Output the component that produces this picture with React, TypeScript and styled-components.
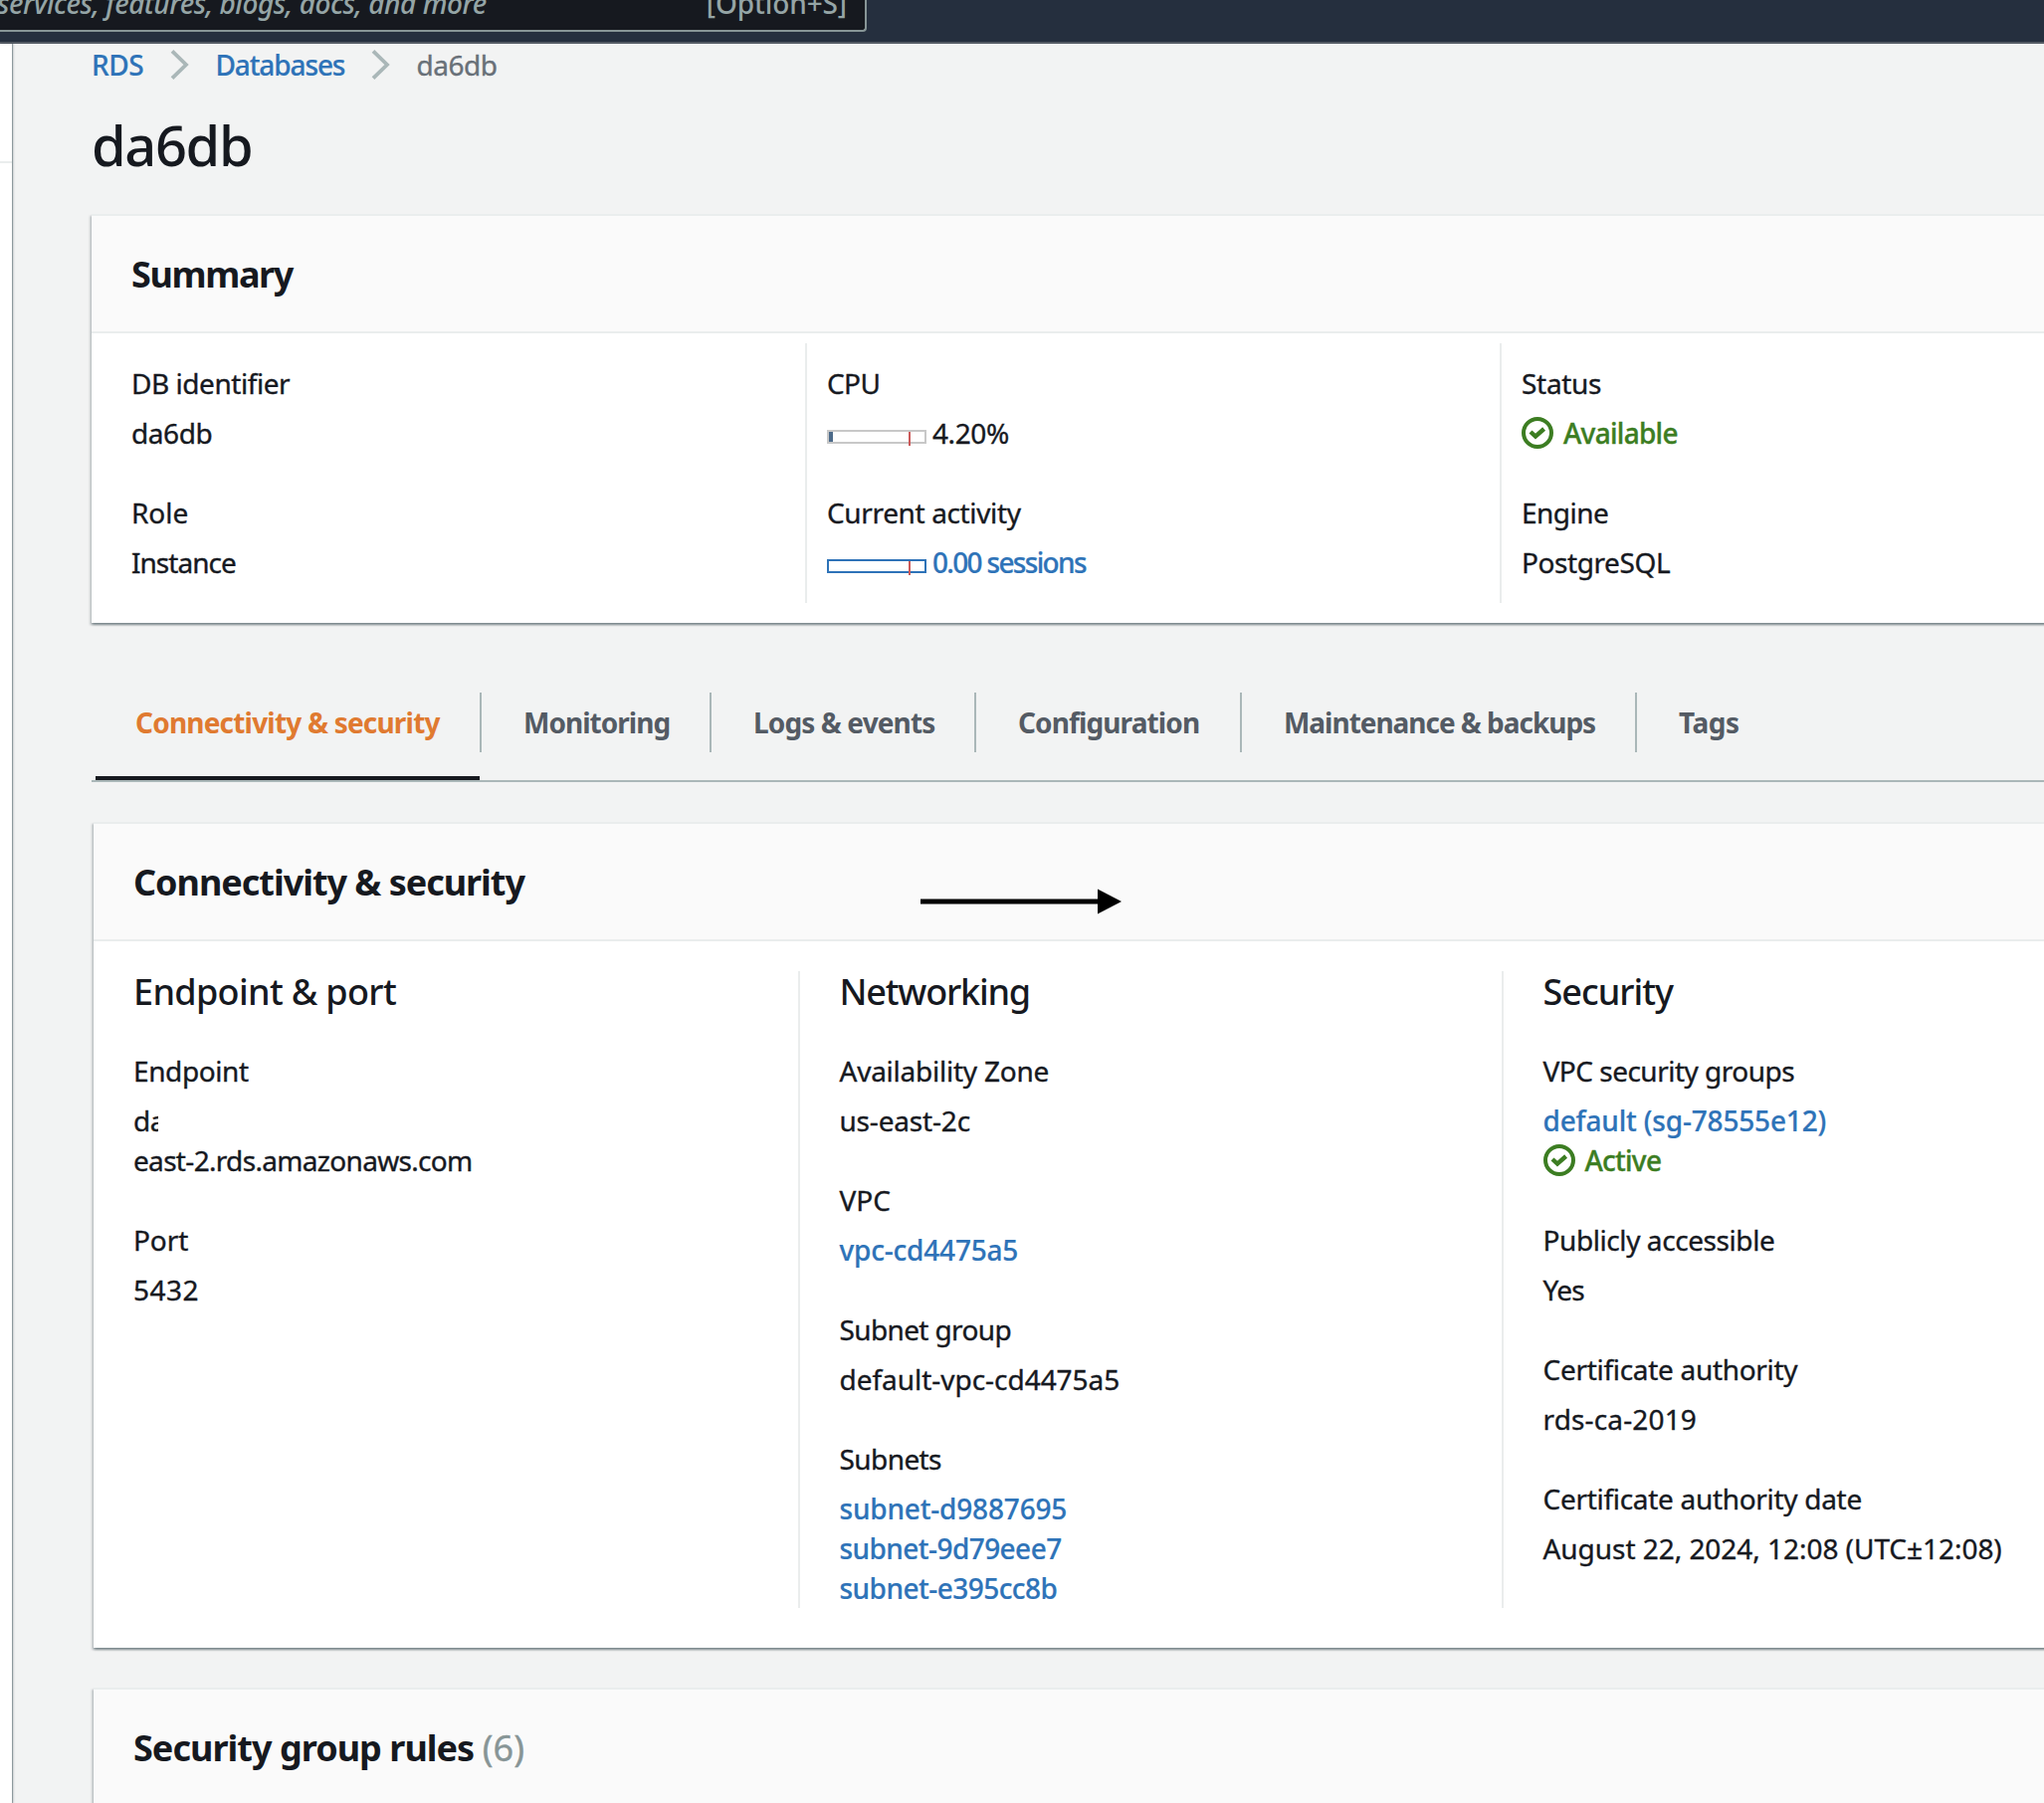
import React from 'react';
import styled, { createGlobalStyle } from 'styled-components';

const GlobalStyle = createGlobalStyle`
  * { box-sizing: border-box; }
  html, body { margin: 0; overflow: hidden; }
  body {
    background: #f2f3f3;
    color: #16191f;
    font: 400 28px/40px "Noto Sans", "Open Sans", sans-serif;
  }
  h1, h2, h3 { margin: 0; }
`;

const Page = styled.div`
  display: flex;
  flex-direction: column;
  width: 2054px;
  height: 1812px;
  overflow: hidden;
`;

const TopBar = styled.header`
  flex: none;
  height: 44px;
  background: #252f3e;
  border-bottom: 2px solid #545b64;
`;

const SearchBox = styled.div`
  display: flex;
  align-items: flex-end;
  justify-content: space-between;
  width: 871px;
  height: 32px;
  padding: 0 18px 7px 0;
  overflow: hidden;
  background: #16191f;
  border: 2px solid #879596;
  border-width: 0 2px 2px 0;
  border-radius: 0 0 4px 0;
  color: #95a5a6;
  font-weight: 500;
  white-space: nowrap;
`;

const SearchHint = styled.span`
  margin-left: -3px;
  font-style: italic;
  letter-spacing: -0.45px;
`;

const Shortcut = styled.span`
  letter-spacing: -0.1px;
`;

const Body = styled.div`
  display: flex;
  flex: 1;
  min-height: 0;
`;

const Rail = styled.aside`
  flex: none;
  width: 12px;
  background: #fff;
  box-shadow: 1px 0 1px rgba(0, 28, 36, 0.35), 2px 0 2px rgba(0, 28, 36, 0.1);
`;

const RailDivider = styled.div`
  height: 120px;
  border-bottom: 2px solid #eaeded;
`;

const Content = styled.main`
  flex: none;
  width: 2100px;
  padding: 1px 0 0 80px;
`;

const Track = styled.span<{ $track: number }>`
  letter-spacing: ${p => p.$track}px;
  white-space: nowrap;
  -webkit-text-stroke: 0.35px currentColor;
`;

const Breadcrumbs = styled.nav`
  display: flex;
  align-items: center;
  height: 40px;
`;

const Link = styled.a<{ $track: number }>`
  color: #2e73b8;
  font-weight: 500;
  letter-spacing: ${p => p.$track}px;
  white-space: nowrap;
  -webkit-text-stroke: 0.2px currentColor;
`;

const Chevron = styled.svg`
  flex: none;
  width: 20px;
  height: 32px;
  margin: 0 25px 0 27px;
`;

const Crumb = styled(Track)`
  color: #687078;
`;

const Title = styled.h1`
  margin-top: 24px;
  height: 72px;
  font-size: 56px;
  font-weight: 500;
  line-height: 72px;
  letter-spacing: -1.4px;
`;

const Card = styled.section<{ $top: number; $inset?: number }>`
  margin: ${p => p.$top}px 0 0 ${p => p.$inset ?? 2}px;
  background: #fff;
  border-top: 2px solid #eaeded;
  box-shadow: 0 2px 2px 0 rgba(0, 28, 36, 0.3), 2px 2px 2px 0 rgba(0, 28, 36, 0.15),
    -2px 2px 2px 0 rgba(0, 28, 36, 0.15);
`;

const CardHeader = styled.div`
  display: flex;
  align-items: center;
  height: 118px;
  padding: 2px 0 0 40px;
  background: #fafafa;
  border-bottom: 2px solid #eaeded;
`;

const CardTitle = styled.h2<{ $track: number }>`
  font-size: 36px;
  font-weight: 700;
  line-height: 44px;
  letter-spacing: ${p => p.$track}px;
  white-space: pre;
`;

const Counter = styled.span`
  color: #879596;
  font-weight: 400;
  letter-spacing: 0.1px;
  -webkit-text-stroke: 0.35px currentColor;
`;

const SummaryGrid = styled.div`
  display: grid;
  grid-template-columns: 699px 698px 1fr;
  padding: 10px 0 20px 20px;
`;

const SummaryColumn = styled.div`
  display: flex;
  flex-direction: column;
  gap: 40px;
  height: 261px;
  padding: 20px 20px 0;
  &:not(:last-child) { border-right: 2px solid #eaeded; }
`;

const DetailGrid = styled.div`
  display: grid;
  grid-template-columns: 670px 707px 1fr;
  padding: 30px 0 40px 40px;
`;

const DetailColumn = styled.div`
  display: flex;
  flex-direction: column;
  gap: 40px;
  height: 640px;
  & + & { padding-left: 39.5px; }
  &:not(:last-child) { border-right: 2px solid #eaeded; }
`;

const ColumnTitle = styled.h3<{ $track: number }>`
  height: 40px;
  font-size: 36px;
  font-weight: 500;
  line-height: 42px;
  letter-spacing: ${p => p.$track}px;
`;

const FieldBox = styled.div`
  display: flex;
  flex-direction: column;
  gap: 10px;
`;

const Lines = styled.div`
  display: flex;
  flex-direction: column;
`;

const Line = styled.div`
  display: flex;
  height: 40px;
`;

const Clipped = styled(Track)`
  width: 25px;
  overflow: hidden;
`;

const StatusLine = styled(Line)`
  align-items: center;
  gap: 10px;
  color: #3c7d22;
  font-weight: 500;
`;

const StatusSvg = styled.svg`
  flex: none;
  width: 32px;
  height: 32px;
`;

const Meter = styled.div<{ $color: string }>`
  position: relative;
  flex: none;
  width: 100px;
  height: 14px;
  margin: 17px 6px 0 0;
  border: 2px solid ${p => p.$color};
`;

const MeterFill = styled.div<{ $width: number }>`
  width: ${p => p.$width}px;
  height: 100%;
  background: #4d6b8a;
`;

const MeterLimit = styled.div`
  position: absolute;
  top: 0;
  left: 80px;
  width: 2px;
  height: 14px;
  background: #cb5a5a;
`;

const TabList = styled.div`
  display: flex;
  height: 90px;
  margin: 70px 0 0 0;
  padding-left: 4px;
  border-bottom: 2px solid #aab7b8;
`;

const Tab = styled.div<{ $width: number; $active?: boolean }>`
  flex: none;
  width: ${p => p.$width}px;
  height: 88px;
  padding-left: ${p => (p.$active ? 40 : 42)}px;
  border-bottom: 4px solid ${p => (p.$active ? '#16191f' : 'transparent')};
  color: ${p => (p.$active ? '#e07a30' : '#545b64')};
`;

const TabLabel = styled.div<{ $track: number }>`
  height: 60px;
  padding: 10px 0;
  font-weight: 700;
  letter-spacing: ${p => p.$track}px;
  white-space: nowrap;
`;

const TabRule = styled.div`
  flex: none;
  width: 2px;
  height: 60px;
  background: #aab7b8;
`;

const Arrow = styled.svg`
  width: 202px;
  height: 26px;
  margin: 37px 0 0 398px;
`;

function Check() {
  return (
    <StatusSvg viewBox="0 0 32 32" fill="none" stroke="currentColor" strokeWidth="4">
      <circle cx="16" cy="16" r="14" />
      <path d="M9 15l5 4.6 8.6-7.6" strokeWidth="4.4" />
    </StatusSvg>
  );
}

function Separator() {
  return (
    <Chevron viewBox="0 0 20 32" fill="none" stroke="#aab7b8" strokeWidth="3.8">
      <path d="M2 2.300l14 13.700L2 29.700" />
    </Chevron>
  );
}

function Field({ label, track, children }: { label: string; track: number; children: React.ReactNode }) {
  return (
    <FieldBox>
      <Line><Track $track={track}>{label}</Track></Line>
      <Lines>{children}</Lines>
    </FieldBox>
  );
}

const tabs = [
  { label: 'Connectivity & security', track: -0.8, width: 386, active: true },
  { label: 'Monitoring', track: -0.98, width: 229 },
  { label: 'Logs & events', track: -0.87, width: 264 },
  { label: 'Configuration', track: -0.88, width: 265 },
  { label: 'Maintenance & backups', track: -1.03, width: 395 },
  { label: 'Tags', track: -0.5, width: 200 },
];

export default function App() {
  return (
    <Page>
      <GlobalStyle />
      <TopBar>
        <SearchBox>
          <SearchHint>services, features, blogs, docs, and more</SearchHint>
          <Shortcut>[Option+S]</Shortcut>
        </SearchBox>
      </TopBar>
      <Body>
        <Rail><RailDivider /></Rail>
        <Content>
          <Breadcrumbs>
            <Link $track={-0.4}>RDS</Link>
            <Separator />
            <Link $track={-1.1}>Databases</Link>
            <Separator />
            <Crumb $track={-0.45}>da6db</Crumb>
          </Breadcrumbs>
          <Title>da6db</Title>

          <Card $top={34} $inset={0}>
            <CardHeader><CardTitle $track={-1.38}>Summary</CardTitle></CardHeader>
            <SummaryGrid>
              <SummaryColumn>
                <Field label="DB identifier" track={-0.45}><Line><Track $track={-0.42}>da6db</Track></Line></Field>
                <Field label="Role" track={-0.05}><Line><Track $track={-0.97}>Instance</Track></Line></Field>
              </SummaryColumn>
              <SummaryColumn>
                <Field label="CPU" track={-0.6}>
                  <Line>
                    <Meter $color="#c8c8c8"><MeterFill $width={4} /><MeterLimit /></Meter>
                    <Track $track={-0.4}>4.20%</Track>
                  </Line>
                </Field>
                <Field label="Current activity" track={-0.36}>
                  <Line>
                    <Meter $color="#2e73b8"><MeterLimit /></Meter>
                    <Link $track={-1.68}>0.00 sessions</Link>
                  </Line>
                </Field>
              </SummaryColumn>
              <SummaryColumn>
                <Field label="Status" track={-0.3}>
                  <StatusLine><Check /><Track $track={-0.72}>Available</Track></StatusLine>
                </Field>
                <Field label="Engine" track={-0.5}><Line><Track $track={-0.42}>PostgreSQL</Track></Line></Field>
              </SummaryColumn>
            </SummaryGrid>
          </Card>

          <TabList>
            {tabs.map((tab, i) => (
              <React.Fragment key={tab.label}>
                {i > 0 && <TabRule />}
                <Tab $width={tab.width} $active={tab.active}><TabLabel $track={tab.track}>{tab.label}</TabLabel></Tab>
              </React.Fragment>
            ))}
          </TabList>

          <Card $top={40}>
            <CardHeader>
              <CardTitle $track={-1.03}>Connectivity &amp; security</CardTitle>
              <Arrow viewBox="0 0 202 26">
                <path d="M0 13h180" stroke="#000" strokeWidth="5" />
                <path d="M178 0.5L202 13L178 25.5z" fill="#000" />
              </Arrow>
            </CardHeader>
            <DetailGrid>
              <DetailColumn>
                <ColumnTitle $track={-0.66}>Endpoint &amp; port</ColumnTitle>
                <Field label="Endpoint" track={-0.4}>
                  <Line><Clipped $track={-0.4}>da</Clipped></Line>
                  <Line><Track $track={-0.68}>east-2.rds.amazonaws.com</Track></Line>
                </Field>
                <Field label="Port" track={-0.1}><Line><Track $track={0.5}>5432</Track></Line></Field>
              </DetailColumn>
              <DetailColumn>
                <ColumnTitle $track={-1.2}>Networking</ColumnTitle>
                <Field label="Availability Zone" track={-0.24}><Line><Track $track={-0.18}>us-east-2c</Track></Line></Field>
                <Field label="VPC" track={0}><Line><Link $track={-0.2}>vpc-cd4475a5</Link></Line></Field>
                <Field label="Subnet group" track={-0.63}><Line><Track $track={-0.03}>default-vpc-cd4475a5</Track></Line></Field>
                <Field label="Subnets" track={-0.58}>
                  <Line><Link $track={-0.18}>subnet-d9887695</Link></Line>
                  <Line><Link $track={-0.56}>subnet-9d79eee7</Link></Line>
                  <Line><Link $track={-0.53}>subnet-e395cc8b</Link></Line>
                </Field>
              </DetailColumn>
              <DetailColumn>
                <ColumnTitle $track={-1}>Security</ColumnTitle>
                <Field label="VPC security groups" track={-0.5}>
                  <Line><Link $track={-0.17}>default (sg-78555e12)</Link></Line>
                  <StatusLine><Check /><Track $track={-0.75}>Active</Track></StatusLine>
                </Field>
                <Field label="Publicly accessible" track={-0.42}><Line><Track $track={-0.75}>Yes</Track></Line></Field>
                <Field label="Certificate authority" track={-0.3}><Line><Track $track={0.15}>rds-ca-2019</Track></Line></Field>
                <Field label="Certificate authority date" track={-0.3}>
                  <Line><Track $track={-0.04}>August 22, 2024, 12:08 (UTC±12:08)</Track></Line>
                </Field>
              </DetailColumn>
            </DetailGrid>
          </Card>

          <Card $top={40}>
            <CardHeader><CardTitle $track={-0.97}>Security group rules <Counter>(6)</Counter></CardTitle></CardHeader>
          </Card>
        </Content>
      </Body>
    </Page>
  );
}
